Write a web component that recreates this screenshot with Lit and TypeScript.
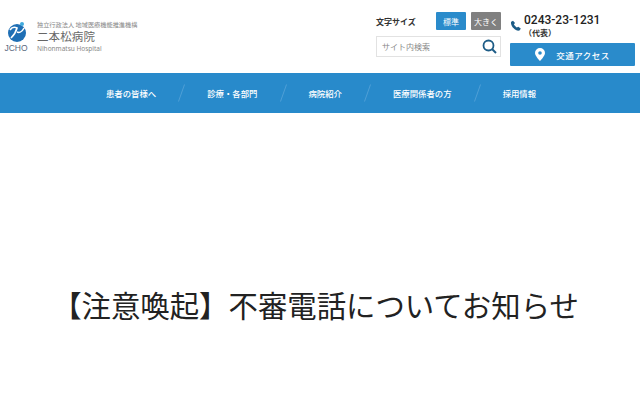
import { LitElement, html, css } from 'lit';
import { customElement } from 'lit/decorators.js';

const NAV = ['患者の皆様へ', '診療・各部門', '病院紹介', '医療関係者の方', '採用情報'];

@customElement('app-root')
export class AppRoot extends LitElement {
  static styles = css`
    :host {
      display: block;
      width: 640px;
      height: 400px;
      overflow: hidden;
      background: #fff;
      font-family: "Noto Sans CJK JP", "Noto Sans", sans-serif;
      color: #222;
    }
    .header {
      display: flex;
      justify-content: space-between;
      height: 73px;
      box-sizing: border-box;
    }
    .brand {
      display: flex;
      padding: 21px 0 0 5px;
      gap: 10px;
    }
    .mark {
      display: flex;
      flex-direction: column;
      align-items: center;
      width: 22px;
    }
    .mark span {
      font-family: "Liberation Sans", sans-serif;
      font-size: 8.5px;
      line-height: 9px;
      margin-top: 2px;
      color: #5a6a80;
      font-weight: 400;
    }
    .names {
      display: flex;
      flex-direction: column;
    }
    .corp {
      font-size: 6.2px;
      line-height: 8px;
      color: #888;
    }
    .name {
      font-size: 11.5px;
      line-height: 15px;
      letter-spacing: 0.1px;
      color: #666;
    }
    .en {
      font-family: "Noto Sans", sans-serif;
      font-size: 6.5px;
      line-height: 9px;
      color: #888;
    }
    .tools {
      display: flex;
      gap: 9px;
      padding: 12px 5px 0 0;
    }
    .left {
      display: flex;
      flex-direction: column;
      gap: 6px;
      width: 125px;
    }
    .size {
      display: flex;
      align-items: center;
      height: 18px;
    }
    .size-label {
      font-size: 8px;
      font-weight: 700;
      width: 60px;
      color: #333;
    }
    .btn {
      width: 30px;
      height: 18px;
      margin-right: 5px;
      border-radius: 1px;
      display: flex;
      align-items: center;
      justify-content: center;
      font-size: 8px;
      color: #fff;
      background: #2a8bcb;
    }
    .btn.gray {
      background: #808080;
      margin-right: 0;
    }
    .search {
      display: flex;
      align-items: center;
      justify-content: space-between;
      box-sizing: border-box;
      height: 21px;
      border: 1px solid #e2e2e2;
      padding: 0 3px 0 5px;
      font-size: 8px;
      color: #888;
    }
    .right {
      display: flex;
      flex-direction: column;
      width: 125px;
    }
    .phone {
      display: flex;
      gap: 3px;
      height: 31px;
    }
    .phone svg {
      margin-top: 8px;
      flex: none;
    }
    .number {
      font-family: "Roboto", sans-serif;
      font-size: 12px;
      font-weight: 500;
      line-height: 14px;
      margin-top: 1px;
      color: #222;
    }
    .daihyo {
      font-size: 8px;
      font-weight: 700;
      line-height: 11px;
      color: #333;
    }
    .access {
      display: flex;
      align-items: center;
      justify-content: center;
      gap: 11px;
      height: 23px;
      background: #2a8bcb;
      border-radius: 1px;
      color: #fff;
      font-size: 8.5px;
      font-weight: 500;
      letter-spacing: 0.5px;
    }
    nav {
      display: flex;
      align-items: center;
      height: 40px;
      background: #288acb;
      padding-left: 106px;
      color: #fff;
      font-size: 8.4px;
      font-weight: 500;
    }
    .item {
      display: flex;
      align-items: center;
    }
    .item svg {
      margin: 0 22px;
    }
    .notice {
      display: flex;
      justify-content: center;
      padding: 173px 9px 0 0;
      font-size: 29.4px;
      line-height: 36px;
      color: #222;
      font-weight: 400;
      white-space: nowrap;
    }
  `;

  render() {
    return html`
      <div class="header">
        <div class="brand">
          <div class="mark">
            <svg width="20" height="21" viewBox="0 0 20 21">
              <circle cx="11" cy="12" r="9" fill="#1f6fb5" />
              <path d="M4 9c2-3 5-3 7-2-1 4-3 7-6 10" fill="none" stroke="#fff" stroke-width="1.6" />
              <path d="M11 11c2 1 5 0 7-4" fill="none" stroke="#fff" stroke-width="1.6" />
              <circle cx="16" cy="3" r="2" fill="#3fa9dd" />
            </svg>
            <span>JCHO</span>
          </div>
          <div class="names">
            <div class="corp">独立行政法人 地域医療機能推進機構</div>
            <div class="name">二本松病院</div>
            <div class="en">Nihonmatsu Hospital</div>
          </div>
        </div>
        <div class="tools">
          <div class="left">
            <div class="size">
              <span class="size-label">文字サイズ</span>
              <span class="btn">標準</span>
              <span class="btn gray">大きく</span>
            </div>
            <div class="search">
              <span>サイト内検索</span>
              <svg width="15" height="15" viewBox="0 0 15 15">
                <circle cx="6.500" cy="6.500" r="5" fill="none" stroke="#1d5c86" stroke-width="1.8" />
                <path d="M10 10l4 4" stroke="#1d5c86" stroke-width="2" />
              </svg>
            </div>
          </div>
          <div class="right">
            <div class="phone">
              <svg width="11" height="11" viewBox="0 0 24 24">
                <path fill="#1d5c86" d="M6.600 1.500 2.500 4C1 8 4 14 8 18s9 6.500 13.500 4.500l2-4-5.500-4-3 2c-2-1-5.500-4.500-6.500-7l2.500-3z" />
              </svg>
              <div>
                <div class="number">0243-23-1231</div>
                <div class="daihyo">（代表）</div>
              </div>
            </div>
            <div class="access">
              <svg width="10" height="13" viewBox="0 0 10 13">
                <path fill="#fff" fill-rule="evenodd" d="M5 0a5 5 0 0 1 5 5c0 3-5 8-5 8S0 8 0 5a5 5 0 0 1 5-5zm0 3.200a1.800 1.800 0 1 0 0 3.600 1.800 1.800 0 0 0 0-3.600z" />
              </svg>
              <span>交通アクセス</span>
            </div>
          </div>
        </div>
      </div>
      <nav>
        ${NAV.map(
          (label, i) => html`
            <div class="item">
              <span>${label}</span>
              ${i < NAV.length - 1
                ? html`<svg width="7" height="18" viewBox="0 0 7 18"><path d="M6.500 0.500 0.500 17.500" stroke="#4f9fd6" fill="none" /></svg>`
                : ''}
            </div>
          `
        )}
      </nav>
      <div class="notice">【注意喚起】不審電話についてお知らせ</div>
    `;
  }
}
